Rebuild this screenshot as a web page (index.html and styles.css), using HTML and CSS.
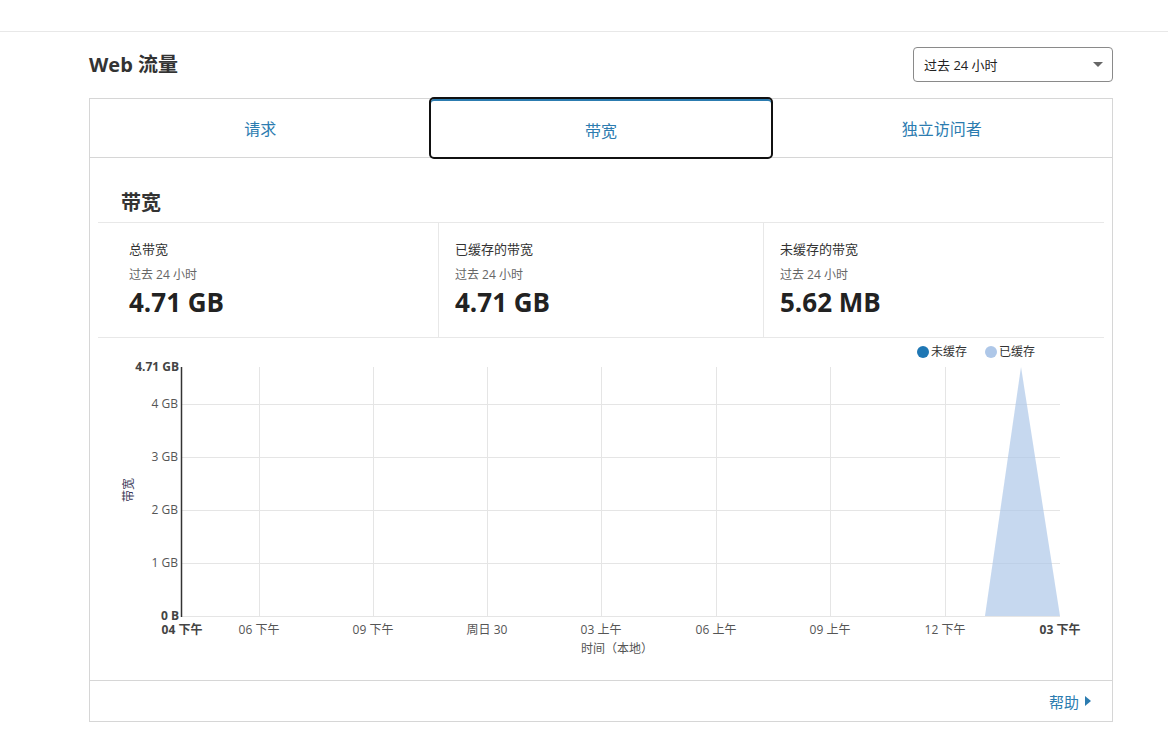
FILE: index.html
```html
<!DOCTYPE html>
<html lang="zh">
<head>
<meta charset="utf-8">
<title>Web 流量</title>
<link rel="stylesheet" href="styles.css">
</head>
<body>
<div class="topbar"></div>
<main class="main">
  <div class="head-row">
    <h1 class="title">Web 流量</h1>
    <div class="select">
      <span class="select-text">过去 24 小时</span>
      <span class="select-arrow"></span>
    </div>
  </div>
  <section class="card">
    <div class="tabs">
      <div class="tab">请求</div>
      <div class="tab tab-active">带宽</div>
      <div class="tab">独立访问者</div>
    </div>
    <div class="panel">
      <h2 class="panel-title">带宽</h2>
      <div class="stats">
        <div class="stat">
          <div class="stat-label">总带宽</div>
          <div class="stat-sub">过去 24 小时</div>
          <div class="stat-value">4.71 GB</div>
        </div>
        <div class="stat stat-sep">
          <div class="stat-label">已缓存的带宽</div>
          <div class="stat-sub">过去 24 小时</div>
          <div class="stat-value">4.71 GB</div>
        </div>
        <div class="stat stat-sep">
          <div class="stat-label">未缓存的带宽</div>
          <div class="stat-sub">过去 24 小时</div>
          <div class="stat-value">5.62 MB</div>
        </div>
      </div>
      <div class="chart">
        <svg class="chart-svg" width="1006" height="342" viewBox="0 0 1006 342">
          <g class="legend">
            <circle cx="825" cy="14" r="6" fill="#1f77b4"/>
            <text x="833" y="18">未缓存</text>
            <circle cx="893" cy="14" r="6" fill="#aec7e8"/>
            <text x="901" y="18">已缓存</text>
          </g>
          <g class="grid">
            <line x1="83" y1="66.5" x2="962" y2="66.5"/>
            <line x1="83" y1="119.5" x2="962" y2="119.5"/>
            <line x1="83" y1="172.5" x2="962" y2="172.5"/>
            <line x1="83" y1="225.5" x2="962" y2="225.5"/>
            <line x1="83" y1="278.5" x2="962" y2="278.5"/>
            <line x1="161.5" y1="29" x2="161.5" y2="278"/>
            <line x1="275.5" y1="29" x2="275.5" y2="278"/>
            <line x1="389.5" y1="29" x2="389.5" y2="278"/>
            <line x1="503.5" y1="29" x2="503.5" y2="278"/>
            <line x1="618.5" y1="29" x2="618.5" y2="278"/>
            <line x1="732.5" y1="29" x2="732.5" y2="278"/>
            <line x1="847.5" y1="29" x2="847.5" y2="278"/>
          </g>
          <polygon points="887,278 923,29 962,278" fill="#aec7e8" fill-opacity="0.7"/>
          <line class="axis" x1="83.5" y1="29" x2="83.5" y2="279"/>
          <g class="ylabels">
            <text class="bold" x="81" y="33">4.71 GB</text>
            <text x="80" y="70">4 GB</text>
            <text x="80" y="123">3 GB</text>
            <text x="80" y="176">2 GB</text>
            <text x="80" y="229">1 GB</text>
            <text class="bold" x="81" y="282">0 B</text>
          </g>
          <g class="xlabels">
            <text class="bold" x="84" y="296">04 下午</text>
            <text x="161" y="296">06 下午</text>
            <text x="275" y="296">09 下午</text>
            <text x="389" y="296">周日 30</text>
            <text x="503" y="296">03 上午</text>
            <text x="618" y="296">06 上午</text>
            <text x="732" y="296">09 上午</text>
            <text x="847" y="296">12 下午</text>
            <text class="bold" x="962" y="296">03 下午</text>
            <text x="519" y="315">时间（本地）</text>
          </g>
          <text class="ytitle" transform="translate(31 152) rotate(-90)" x="0" y="4">带宽</text>
        </svg>
      </div>
    </div>
    <div class="card-footer">
      <a class="help" href="#">帮助<span class="help-arrow"></span></a>
    </div>
  </section>
</main>
</body>
</html>
```

FILE: styles.css
```css
* { box-sizing: border-box; }
html, body { margin: 0; padding: 0; background: #fff; }
body {
  font-family: "Open Sans", "Noto Sans CJK SC", sans-serif;
  color: #333;
  width: 1168px;
  height: 735px;
  overflow: hidden;
}
.topbar {
  height: 32px;
  border-bottom: 1px solid #e8e8e8;
}
.main {
  padding-left: 89px;
  width: 1113px;
}
.head-row {
  display: flex;
  align-items: center;
  justify-content: space-between;
  padding-top: 15px;
  margin-bottom: 16px;
}
.title {
  margin: 0;
  font-size: 20px;
  font-weight: 700;
  color: #333;
  line-height: 35px;
}
.select {
  width: 200px;
  height: 35px;
  border: 1px solid #8a8a8a;
  border-radius: 4px;
  display: flex;
  align-items: center;
  justify-content: space-between;
  padding: 0 9px 0 10px;
  font-size: 13px;
  color: #222;
}
.select-arrow {
  width: 0;
  height: 0;
  border-left: 5px solid transparent;
  border-right: 5px solid transparent;
  border-top: 5px solid #666;
}
.card {
  width: 1024px;
  border: 1px solid #d6d6d6;
}
.tabs {
  display: flex;
  height: 59px;
  border-bottom: 1px solid #d6d6d6;
}
.tab {
  flex: 1;
  display: flex;
  align-items: center;
  justify-content: center;
  font-size: 16px;
  color: #2c7cb0;
}
.tab-active {
  outline: 2px solid #111;
  border-radius: 3px;
  box-shadow: inset 0 2px 0 #2c7cb0;
  padding-top: 4px;
}
.panel {
  padding: 0 8px;
}
.panel-title {
  margin: 0;
  height: 65px;
  padding-left: 23px;
  padding-top: 35px;
  font-size: 20px;
  font-weight: 700;
  line-height: 20px;
  border-bottom: 1px solid #e8e8e8;
  color: #333;
}
.stats {
  display: grid;
  grid-template-columns: 325px 325px 325px;
  padding: 0 15px;
  border-bottom: 1px solid #e8e8e8;
  height: 115px;
}
.stat {
  padding: 16px 16px 0;
}
.stat-sep {
  border-left: 1px solid #e8e8e8;
}
.stat-label {
  font-size: 13px;
  line-height: 20px;
  color: #333;
}
.stat-sub {
  margin-top: 7px;
  font-size: 12px;
  line-height: 18px;
  color: #666;
}
.stat-value {
  margin-top: 1px;
  font-size: 26px;
  font-weight: 700;
  line-height: 34px;
  color: #222;
}
.chart {
  height: 342px;
}
.chart-svg {
  display: block;
  font-family: "Open Sans", "Noto Sans CJK SC", sans-serif;
}
.legend text {
  font-size: 12px;
  fill: #333;
}
.grid line {
  stroke: #e5e5e5;
  stroke-width: 1;
}
.axis {
  stroke: #333;
  stroke-width: 1.5;
}
.ylabels text {
  font-size: 12px;
  fill: #555;
  text-anchor: end;
}
.xlabels text {
  font-size: 12px;
  fill: #555;
  text-anchor: middle;
}
.ylabels .bold, .xlabels .bold {
  font-weight: 700;
  fill: #444;
}
.ytitle {
  font-size: 12px;
  fill: #3a3a5a;
  text-anchor: middle;
}
.card-footer {
  border-top: 1px solid #d6d6d6;
  height: 41px;
  display: flex;
  align-items: center;
  justify-content: flex-end;
  padding-right: 21px;
}
.help {
  font-size: 15px;
  color: #2c7cb0;
  text-decoration: none;
  display: flex;
  align-items: center;
  gap: 6px;
}
.help-arrow {
  width: 0;
  height: 0;
  border-top: 5px solid transparent;
  border-bottom: 5px solid transparent;
  border-left: 6px solid #2c7cb0;
}
```
